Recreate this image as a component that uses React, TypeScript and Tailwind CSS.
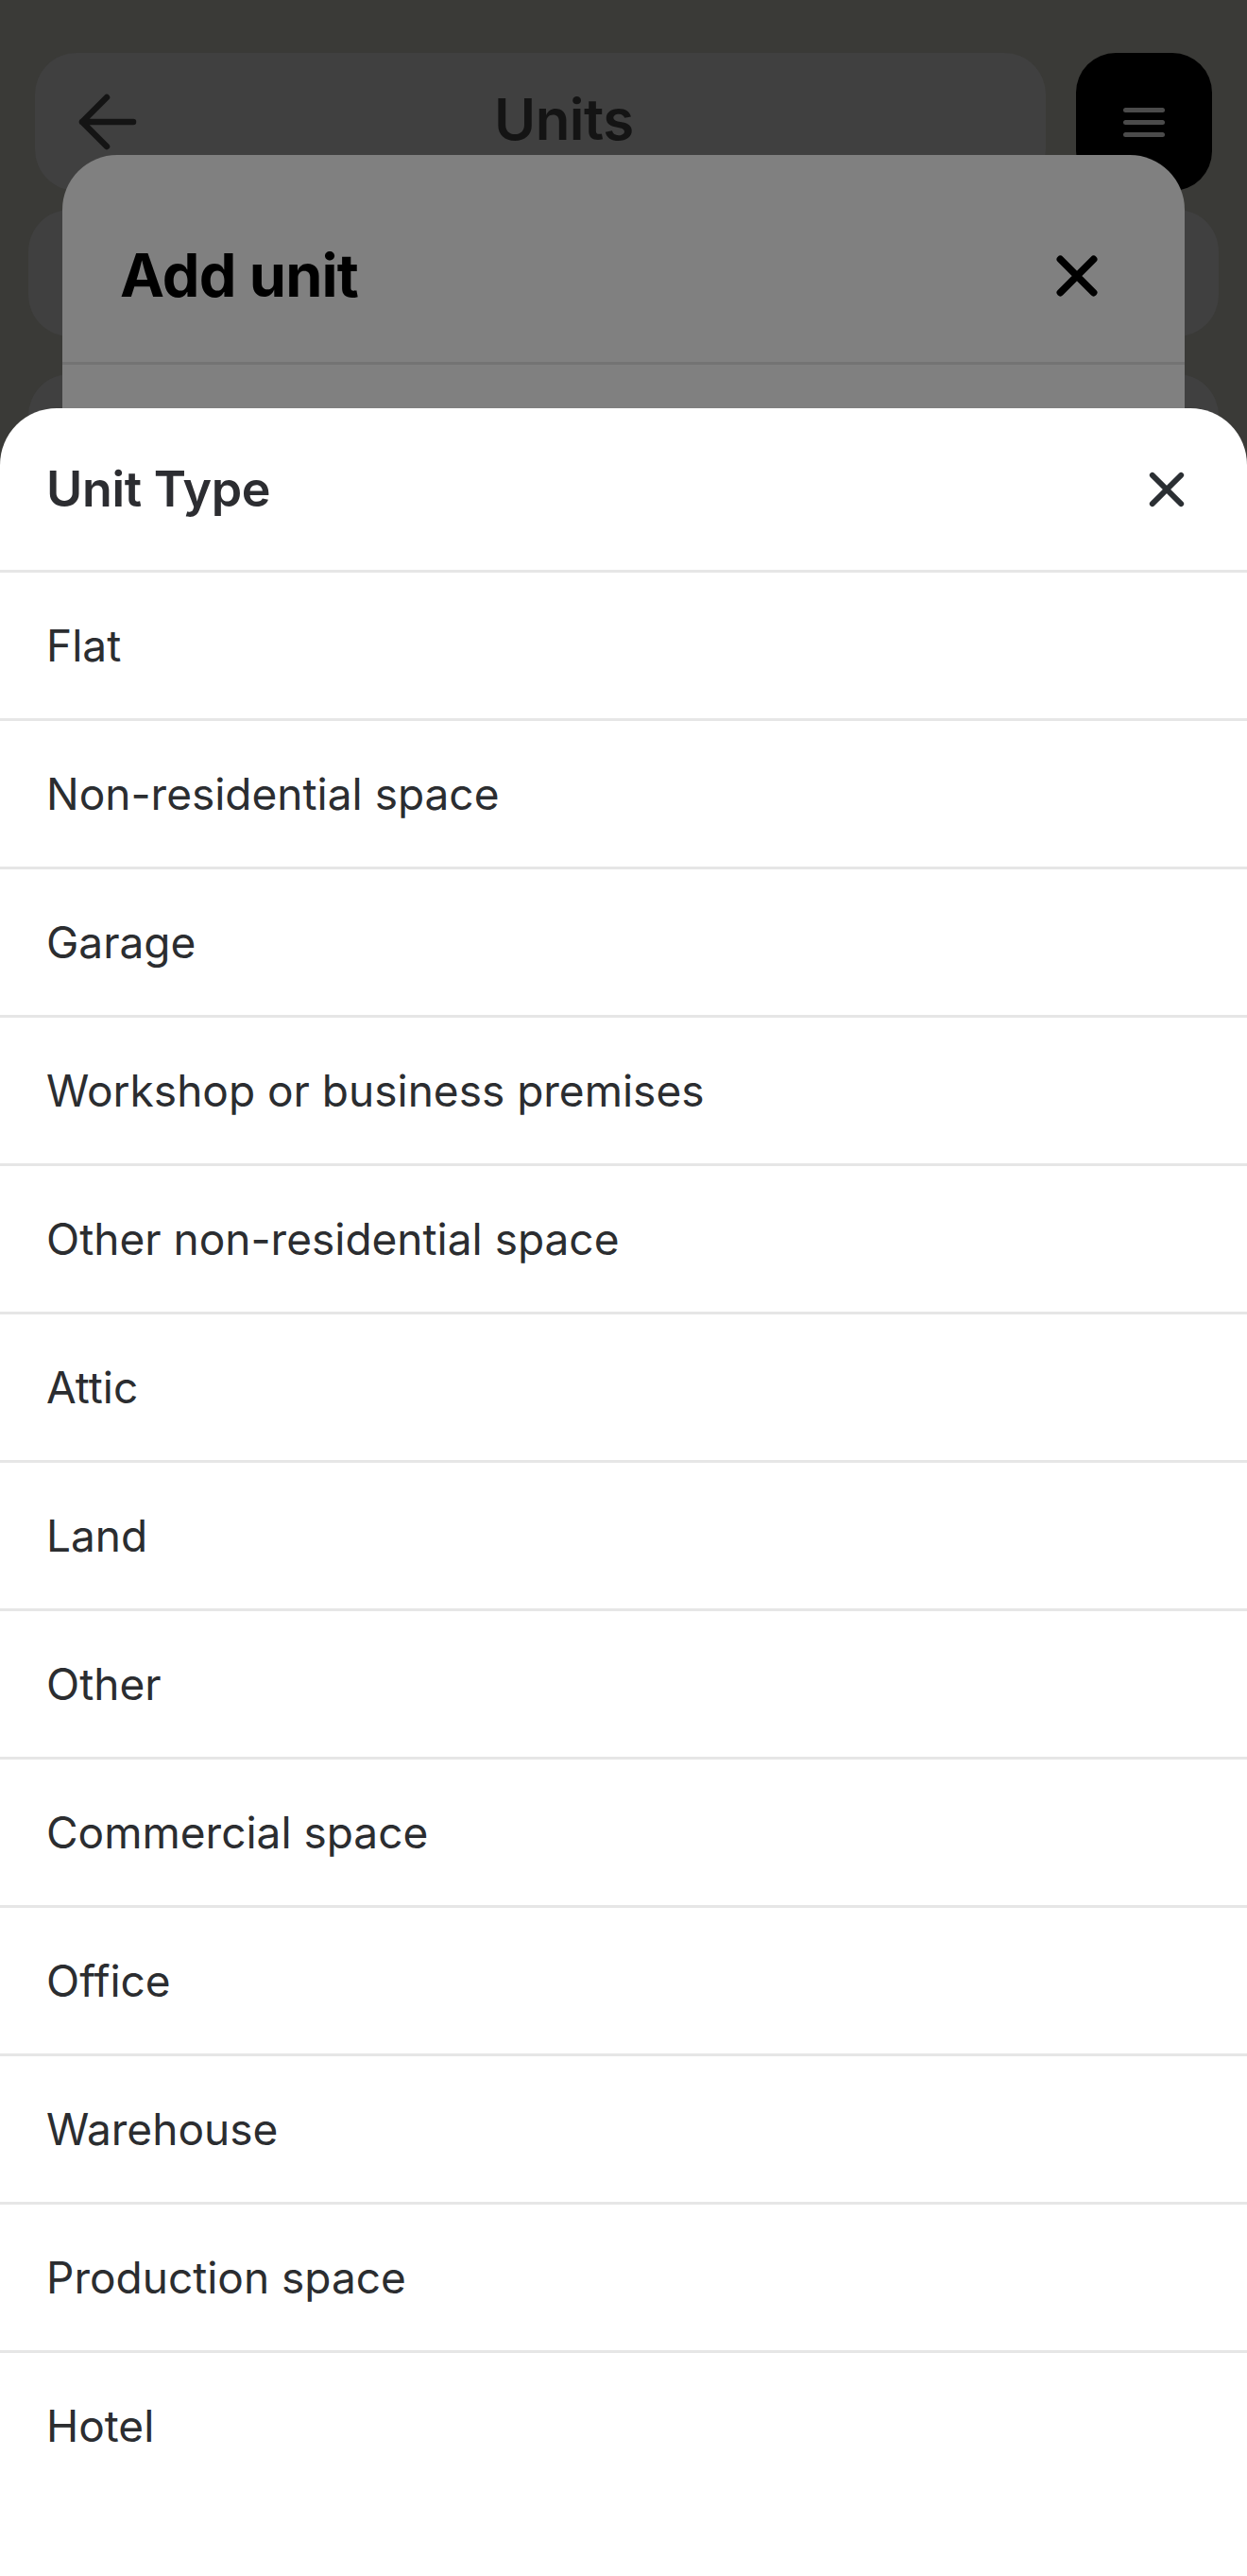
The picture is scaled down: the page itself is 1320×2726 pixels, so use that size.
import React from "react";

const UNIT_TYPES = [
  "Flat",
  "Non-residential space",
  "Garage",
  "Workshop or business premises",
  "Other non-residential space",
  "Attic",
  "Land",
  "Other",
  "Commercial space",
  "Office",
  "Warehouse",
  "Production space",
  "Hotel",
];

function CloseIcon({ size, stroke, color }: { size: number; stroke: number; color: string }) {
  return (
    <svg width={size} height={size} viewBox="0 0 40 40" fill="none">
      <path
        d="M4 4L36 36M36 4L4 36"
        stroke={color}
        strokeWidth={stroke}
        strokeLinecap="round"
      />
    </svg>
  );
}

function PageBehind() {
  return (
    <div className="flex flex-col">
      <div className="flex gap-[32px] pl-[37px] pr-[37px] pt-[56px]">
        <div className="relative flex h-[146px] flex-1 items-center rounded-[44px] bg-[#404040]">
          <div className="pl-[46px]">
            <svg width="62" height="60" viewBox="0 0 62 60" fill="none">
              <path
                d="M58 30H4M30 4L4 30L30 56"
                stroke="#141414"
                strokeWidth="6.5"
                strokeLinecap="round"
                strokeLinejoin="round"
              />
            </svg>
          </div>
          <span className="absolute left-[486px] top-[34px] text-[60px] leading-[72px] font-semibold tracking-[-0.5px] text-[#141414]">
            Units
          </span>
        </div>
        <div className="flex h-[146px] w-[144px] flex-col items-center justify-center gap-[8px] rounded-[42px] bg-black">
          <div className="h-[5px] w-[44px] rounded-full bg-[#4b4b4b]" />
          <div className="h-[5px] w-[44px] rounded-full bg-[#4b4b4b]" />
          <div className="h-[5px] w-[44px] rounded-full bg-[#4b4b4b]" />
        </div>
      </div>
      <div className="mx-[30px] mt-[20px] h-[134px] rounded-[44px] bg-[#404040]" />
      <div className="mx-[30px] mt-[40px] h-[134px] rounded-[44px] bg-[#404040]" />
    </div>
  );
}

function AddUnitModal() {
  return (
    <div className="absolute left-[66px] top-[164px] h-[400px] w-[1188px] rounded-t-[58px] bg-[#808080]">
      <div className="flex h-[219px] items-center justify-between pl-[61px] pr-[92px] pt-[36px]">
        <span className="text-[63px] font-bold tracking-[-0.8px] text-black">Add unit</span>
        <CloseIcon size={44} stroke={7} color="#000" />
      </div>
      <div className="h-[3px] bg-[#737373]" />
    </div>
  );
}

function UnitTypeSheet() {
  return (
    <div className="absolute left-0 right-0 top-[432px] bottom-0 rounded-t-[60px] bg-white">
      <div className="flex h-[171px] items-center justify-between pl-[49px] pr-[66px]">
        <span className="text-[52px] font-semibold tracking-[-0.3px] text-[#2c2d31]">Unit Type</span>
        <CloseIcon size={38} stroke={6.2} color="#2b2f33" />
      </div>
      {UNIT_TYPES.map((t) => (
        <div key={t}>
          <div className="h-[3px] bg-[#e6e6e6]" />
          <div className="flex h-[154px] items-center pl-[49px] text-[46px] text-[#2b2d30]">{t}</div>
        </div>
      ))}
    </div>
  );
}

export default function App() {
  return (
    <div
      className="relative h-[2726px] w-[1320px] overflow-hidden bg-[#3a3a37]"
      style={{ fontFamily: "Inter, 'Noto Sans', sans-serif" }}
    >
      <PageBehind />
      <AddUnitModal />
      <UnitTypeSheet />
    </div>
  );
}
